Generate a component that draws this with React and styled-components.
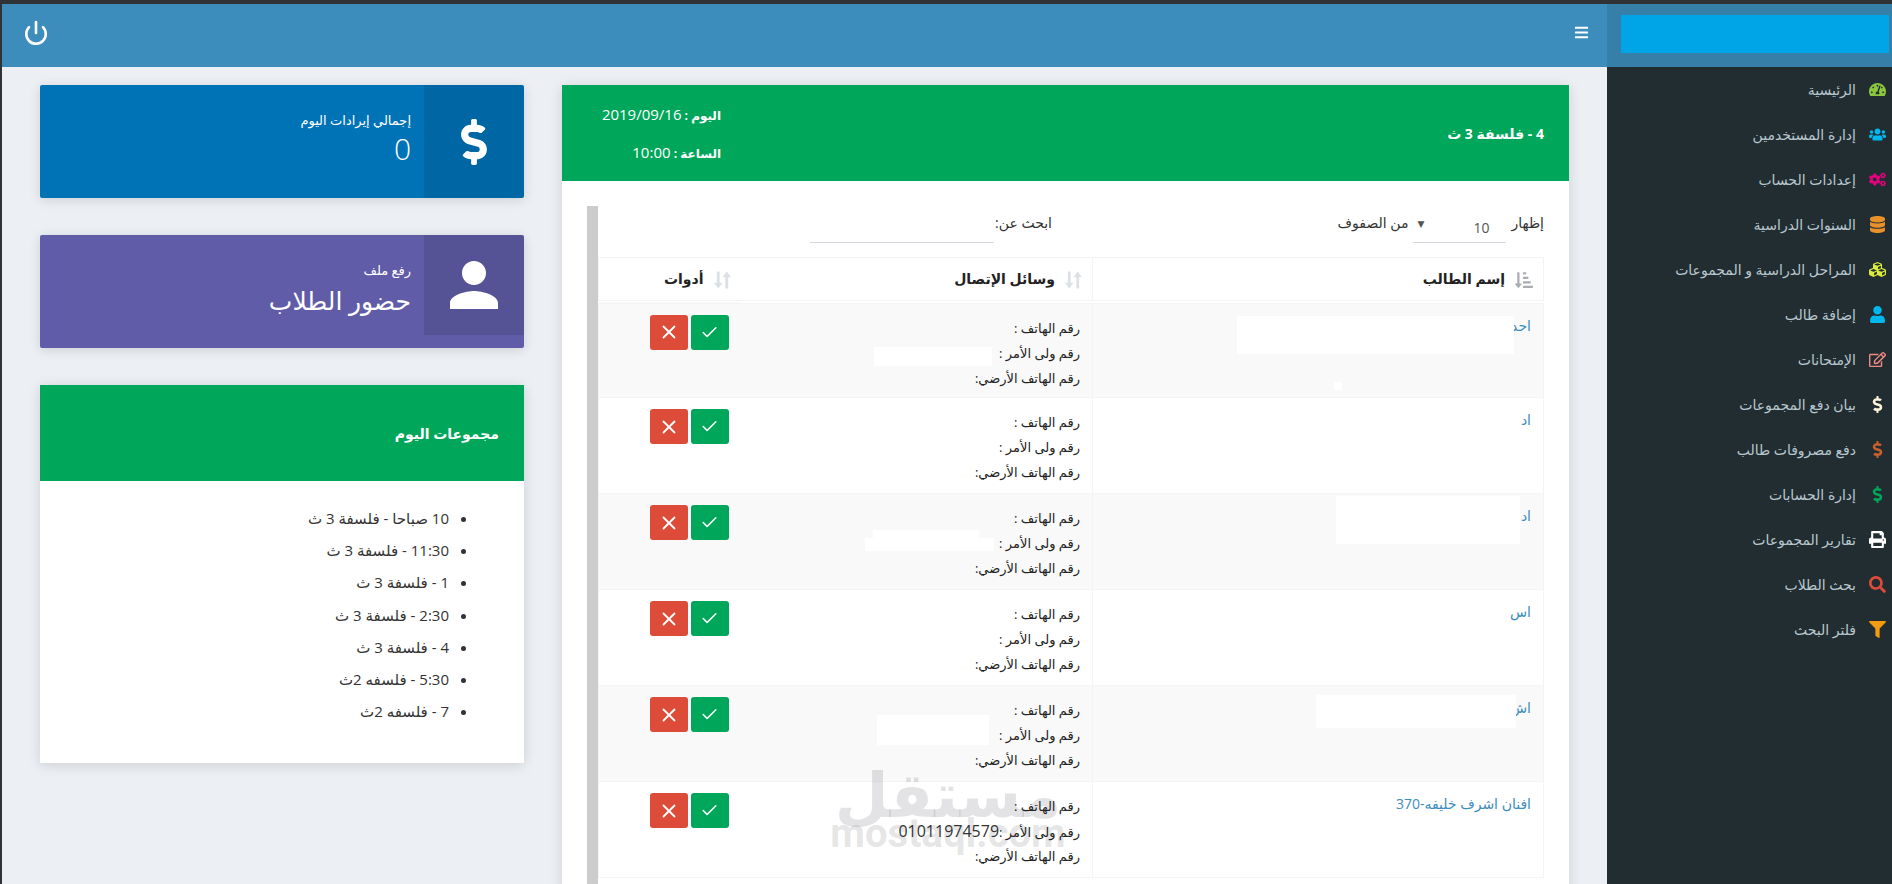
import styled, { createGlobalStyle } from "styled-components";
import { Check, X, Power } from "lucide-react";
import { IoMdPerson } from "react-icons/io";
import {
  FaBars,
  FaCogs,
  FaCubes,
  FaDatabase,
  FaDollarSign,
  FaFilter,
  FaPrint,
  FaRegEdit,
  FaSearch,
  FaSortAmountDownAlt,
  FaTachometerAlt,
  FaUser,
  FaUsers,
} from "react-icons/fa";

const FONT = `"Open Sans", "DejaVu Sans", sans-serif`;

const menu = [
  { label: "الرئيسية", icon: FaTachometerAlt, color: "#8cc63f" },
  { label: "إدارة المستخدمين", icon: FaUsers, color: "#00b7ee" },
  { label: "إعدادات الحساب", icon: FaCogs, color: "#e6007e" },
  { label: "السنوات الدراسية", icon: FaDatabase, color: "#e8902a" },
  { label: "المراحل الدراسية و المجموعات", icon: FaCubes, color: "#dcec3c" },
  { label: "إضافة طالب", icon: FaUser, color: "#00b7ee" },
  { label: "الإمتحانات", icon: FaRegEdit, color: "#f08a80" },
  { label: "بيان دفع المجموعات", icon: FaDollarSign, color: "#fff3dc" },
  { label: "دفع مصروفات طالب", icon: FaDollarSign, color: "#c8602a" },
  { label: "إدارة الحسابات", icon: FaDollarSign, color: "#00a65a" },
  { label: "تقارير المجموعات", icon: FaPrint, color: "#ffffff" },
  { label: "بحث الطلاب", icon: FaSearch, color: "#dd4b39" },
  { label: "فلتر البحث", icon: FaFilter, color: "#f39c12" },
];

const groups = [
  "10 صباحا - فلسفة 3 ث",
  "11:30 - فلسفة 3 ث",
  "1 - فلسفة 3 ث",
  "2:30 - فلسفة 3 ث",
  "4 - فلسفة 3 ث",
  "5:30 - فلسفه 2ث",
  "7 - فلسفه 2ث",
];

const students = [
  {
    name: "احد",
    namePatches: [
      { x: 1236, y: 12, w: 277, h: 38 },
      { x: 1333, y: 78, w: 8, h: 8 },
    ],
    contactPatches: [{ x: 873, y: 43, w: 118, h: 19 }],
  },
  { name: "اد" },
  {
    name: "اد",
    namePatches: [{ x: 1335, y: 2, w: 184, h: 48 }],
    contactPatches: [
      { x: 872, y: 36, w: 106, h: 8 },
      { x: 864, y: 44, w: 129, h: 13 },
    ],
  },
  { name: "اس" },
  {
    name: "اش",
    namePatches: [{ x: 1315, y: 9, w: 200, h: 33 }],
    contactPatches: [{ x: 876, y: 29, w: 112, h: 30 }],
  },
  { name: "افنان اشرف خليفه-370", phone: "01011974579" },
];

const App = () => {
  return (
    <Shell dir="rtl">
      <GlobalStyle />
      <TopRow>
        <LogoArea>
          <LogoBlock />
        </LogoArea>
        <Navbar>
          <FaBars size={15} />
          <Power size={26} strokeWidth={2.4} />
        </Navbar>
      </TopRow>
      <BodyRow>
        <Sidebar>
          {menu.map((item) => (
            <MenuItem key={item.label}>
              <MenuIcon $color={item.color}>
                <item.icon />
              </MenuIcon>
              <span>{item.label}</span>
            </MenuItem>
          ))}
        </Sidebar>
        <Content>
          <MainPanel>
            <PanelHead>
              <MainTitle>4 - فلسفة 3 ث</MainTitle>
              <DateBlock>
                <DateLine>
                  <b>اليوم : </b>2019/09/16
                </DateLine>
                <DateLine>
                  <b>الساعة : </b>10:00
                </DateLine>
              </DateBlock>
            </PanelHead>
            <PanelBody>
              <TableWrap>
                <Filters>
                  <LengthFilter>
                    <span>إظهار</span>
                    <FakeSelect>
                      <span>10</span>
                      <small>▼</small>
                    </FakeSelect>
                    <span>من الصفوف</span>
                  </LengthFilter>
                  <SearchFilter>
                    <span>ابحث عن:</span>
                    <SearchInput aria-label="بحث" />
                  </SearchFilter>
                </Filters>
                <Table>
                  <colgroup>
                    <col style={{ width: 451 }} />
                    <col style={{ width: 352 }} />
                    <col />
                  </colgroup>
                  <thead>
                    <tr>
                      <HeadCell $bordered>
                        <SortActive />
                        إسم الطالب
                      </HeadCell>
                      <HeadCell>
                        <SortIdle />
                        وسائل الإتصال
                      </HeadCell>
                      <HeadCell>
                        <SortIdle />
                        أدوات
                      </HeadCell>
                    </tr>
                  </thead>
                  <tbody>
                    {students.map((s, i) => (
                      <StudentRow key={i} $odd={i % 2 === 0}>
                        <NameCell>
                          <a>{s.name}</a>
                          {(s.namePatches || []).map((p, j) => (
                            <Patch key={j} $x={p.x - 1092} $y={p.y} $w={p.w} $h={p.h} />
                          ))}
                        </NameCell>
                        <ContactCell>
                          <p>رقم الهاتف :</p>
                          <p>
                            رقم ولى الأمر :{s.phone && <Phone>{s.phone}</Phone>}
                          </p>
                          <p>رقم الهاتف الأرضي:</p>
                          {(s.contactPatches || []).map((p, j) => (
                            <Patch key={j} $x={p.x - 740} $y={p.y} $w={p.w} $h={p.h} />
                          ))}
                        </ContactCell>
                        <ToolsCell>
                          <Tools>
                            <ToolButton $color="#00a65a" aria-label="حاضر">
                              <Check size={19} strokeWidth={2} />
                            </ToolButton>
                            <ToolButton $color="#dd4b39" aria-label="غائب">
                              <X size={22} strokeWidth={2} />
                            </ToolButton>
                          </Tools>
                        </ToolsCell>
                      </StudentRow>
                    ))}
                  </tbody>
                </Table>
              </TableWrap>
            </PanelBody>
          </MainPanel>

          <SideColumn>
            <InfoBox $bg="#0073b7">
              <InfoIcon $h={113}>
                <FaDollarSign size={46} />
              </InfoIcon>
              <InfoText>
                <InfoLabel>إجمالي إيرادات اليوم</InfoLabel>
                <InfoNumber>0</InfoNumber>
              </InfoText>
            </InfoBox>
            <InfoBox $bg="#605ca8">
              <InfoIcon $h={100}>
                <IoMdPerson size={64} />
              </InfoIcon>
              <InfoText>
                <InfoLabel>رفع ملف</InfoLabel>
                <InfoTitle>حضور الطلاب</InfoTitle>
              </InfoText>
            </InfoBox>
            <GroupsPanel>
              <GroupsHead>مجموعات اليوم</GroupsHead>
              <GroupsList>
                {groups.map((g) => (
                  <li key={g}>{g}</li>
                ))}
              </GroupsList>
            </GroupsPanel>
          </SideColumn>
        </Content>
      </BodyRow>
      <Watermark>
        <strong>مستقل</strong>
        <span>mostaql.com</span>
      </Watermark>
    </Shell>
  );
};

const SortIdle = () => (
  <SortSvg viewBox="0 0 18 18" $color="#dde1e6">
    <path d="M3 0h3v12h3l-4.5 6L0 12h3z" />
    <path d="M12 18h3V6h3l-4.5-6L9 6h3z" />
  </SortSvg>
);

const SortActive = () => (
  <SortIconWrap>
    <FaSortAmountDownAlt size={18} />
  </SortIconWrap>
);

const GlobalStyle = createGlobalStyle`
  html, body {
    margin: 0;
    height: 100%;
    overflow: hidden;
    background: #2f3336;
  }
  * { box-sizing: border-box; }
`;

const Shell = styled.div`
  position: relative;
  width: 1892px;
  height: 884px;
  overflow: hidden;
  padding: 4px 0 0 2px;
  background: #2f3336;
  font-family: ${FONT};
  font-size: 14px;
  color: #333;
`;

const TopRow = styled.header`
  display: flex;
  height: 63px;
`;

const LogoArea = styled.div`
  width: 285px;
  flex-shrink: 0;
  background: #367fa9;
  padding: 11px 3px 14px 14px;
`;

const LogoBlock = styled.div`
  height: 38px;
  background: #00a5e8;
`;

const Navbar = styled.div`
  flex: 1;
  background: #3c8dbc;
  color: #fff;
  display: flex;
  align-items: center;
  justify-content: space-between;
  padding: 0 18px 6px 21px;
`;

const BodyRow = styled.div`
  display: flex;
  height: 817px;
`;

const Sidebar = styled.nav`
  width: 285px;
  flex-shrink: 0;
  background: #222d32;
`;

const MenuItem = styled.div`
  height: 45px;
  display: flex;
  align-items: center;
  gap: 10px;
  padding-right: 4px;
  color: #b8c7ce;
  font-size: 14px;
  white-space: nowrap;
`;

const MenuIcon = styled.i`
  width: 22px;
  display: flex;
  justify-content: center;
  color: ${(p) => p.$color};
  font-size: 17px;
`;

const Content = styled.main`
  flex: 1;
  background: #ecf0f5;
  display: flex;
  gap: 38px;
  padding: 18px 38px 0;
  align-items: flex-start;
`;

const MainPanel = styled.section`
  width: 1007px;
  flex-shrink: 0;
  height: 830px;
  background: #fff;
  box-shadow: 0 2px 12px rgba(0, 0, 0, 0.14);
`;

const PanelHead = styled.div`
  height: 96px;
  background: #00a65a;
  color: #fff;
  display: flex;
  align-items: center;
  justify-content: space-between;
  padding: 0 25px;
`;

const MainTitle = styled.h3`
  margin: 0;
  font-size: 14px;
  font-weight: 700;
  padding-top: 1px;
`;

const DateBlock = styled.div`
  font-size: 14px;
  width: 134px;
`;

const DateLine = styled.div`
  height: 38px;
  line-height: 38px;
  white-space: nowrap;
  font-size: 15px;
  b {
    font-size: 12px;
  }
`;

const PanelBody = styled.div`
  padding: 25px 25px 0;
`;

const TableWrap = styled.div`
  border-left: 11px solid #ccc;
  height: 700px;
`;

const Filters = styled.div`
  height: 51px;
  display: grid;
  grid-template-columns: 1fr 1fr;
  align-items: start;
  font-size: 14px;
  padding-top: 7px;
`;

const LengthFilter = styled.div`
  display: flex;
  align-items: flex-start;
  gap: 5px;
  white-space: nowrap;
`;

const FakeSelect = styled.div`
  width: 93px;
  height: 30px;
  border-bottom: 1px solid #d2d6de;
  display: flex;
  justify-content: space-between;
  font-size: 14px;
  padding: 5px 17px 0 4px;
  color: #555;
  small {
    font-size: 9px;
    margin-top: -1px;
  }
`;

const SearchFilter = styled.div`
  display: flex;
  align-items: flex-start;
  gap: 1px;
  padding-right: 19px;
  white-space: nowrap;
`;

const SearchInput = styled.input`
  width: 184px;
  height: 30px;
  border: none;
  border-bottom: 1px solid #d2d6de;
  outline: none;
  background: transparent;
`;

const Table = styled.table`
  width: 946px;
  table-layout: fixed;
  border-collapse: collapse;
  border: 1px solid #f4f4f4;
`;

const HeadCell = styled.th`
  height: 44px;
  padding: 0 10px 0 8px;
  font-size: 14px;
  font-weight: 700;
  text-align: right;
  color: #222;
  border-bottom: 4px double #f4f4f4;
  border-left: ${(p) => (p.$bordered ? "1px solid #f4f4f4" : "none")};
  white-space: nowrap;
`;

const SortSvg = styled.svg`
  width: 17px;
  height: 18px;
  fill: ${(p) => p.$color};
  margin-left: 10px;
  vertical-align: middle;
`;

const SortIconWrap = styled.span`
  display: inline-block;
  color: #a9adb3;
  margin-left: 10px;
  vertical-align: middle;
  svg {
    display: block;
  }
`;

const StudentRow = styled.tr`
  height: 96px;
  background: ${(p) => (p.$odd ? "#f9f9f9" : "#fff")};
  border-top: 1px solid #f4f4f4;
`;

const NameCell = styled.td`
  position: relative;
  vertical-align: top;
  padding: 12px 12px 0;
  border-left: 1px solid #f4f4f4;
  font-size: 14px;
  a {
    color: #3c8dbc;
  }
`;

const ContactCell = styled.td`
  position: relative;
  vertical-align: top;
  padding: 12px 12px 0 0;
  font-size: 13px;
  color: #222;
  p {
    margin: 0;
    line-height: 25px;
    height: 25px;
    white-space: nowrap;
  }
`;

const Phone = styled.span`
  font-size: 16px;
  letter-spacing: 0.4px;
  color: #333;
`;

const Patch = styled.div`
  position: absolute;
  left: ${(p) => p.$x}px;
  top: ${(p) => p.$y}px;
  width: ${(p) => p.$w}px;
  height: ${(p) => p.$h}px;
  background: #fff;
`;

const ToolsCell = styled.td`
  vertical-align: top;
  padding: 11px 12px 0 0;
`;

const Tools = styled.div`
  display: flex;
  gap: 3px;
`;

const ToolButton = styled.button`
  width: 38px;
  height: 35px;
  border: none;
  border-radius: 3px;
  padding: 0;
  background: ${(p) => p.$color};
  color: #fff;
  display: flex;
  align-items: center;
  justify-content: center;
`;

const SideColumn = styled.div`
  width: 484px;
  flex-shrink: 0;
  display: flex;
  flex-direction: column;
  gap: 37px;
`;

const InfoBox = styled.div`
  height: 113px;
  border-radius: 2px;
  background: ${(p) => p.$bg};
  color: #fff;
  display: flex;
  box-shadow: 0 2px 12px rgba(0, 0, 0, 0.14);
  overflow: hidden;
`;

const InfoIcon = styled.div`
  width: 100px;
  height: ${(p) => p.$h}px;
  flex-shrink: 0;
  background: rgba(0, 0, 0, 0.1);
  display: flex;
  align-items: center;
  justify-content: center;
`;

const InfoText = styled.div`
  padding: 22px 13px 0 0;
`;

const InfoLabel = styled.div`
  font-size: 13px;
  line-height: 26px;
`;

const InfoNumber = styled.div`
  font-size: 30px;
  line-height: 32px;
  font-weight: 300;
`;

const InfoTitle = styled.div`
  font-size: 25px;
  line-height: 34px;
`;

const GroupsPanel = styled.section`
  height: 378px;
  background: #fff;
  box-shadow: 0 2px 12px rgba(0, 0, 0, 0.14);
`;

const GroupsHead = styled.h3`
  margin: 0;
  height: 96px;
  background: #00a65a;
  color: #fff;
  font-size: 14px;
  font-weight: 700;
  display: flex;
  align-items: center;
  padding: 0 25px;
`;

const GroupsList = styled.ul`
  margin: 0;
  padding: 21px 75px 0 0;
  font-size: 15px;
  color: #333;
  li {
    height: 32.2px;
    line-height: 32.2px;
  }
`;

const Watermark = styled.div`
  position: absolute;
  left: 832px;
  top: 762px;
  width: 232px;
  display: flex;
  flex-direction: column;
  align-items: center;
  color: rgba(60, 60, 70, 0.14);
  pointer-events: none;
  line-height: 1;
  strong {
    font-size: 62px;
    font-weight: 700;
  }
  span {
    direction: ltr;
    font-family: "Roboto", sans-serif;
    font-size: 40px;
    font-weight: 700;
    margin-top: -10px;
  }
`;

export default App;
